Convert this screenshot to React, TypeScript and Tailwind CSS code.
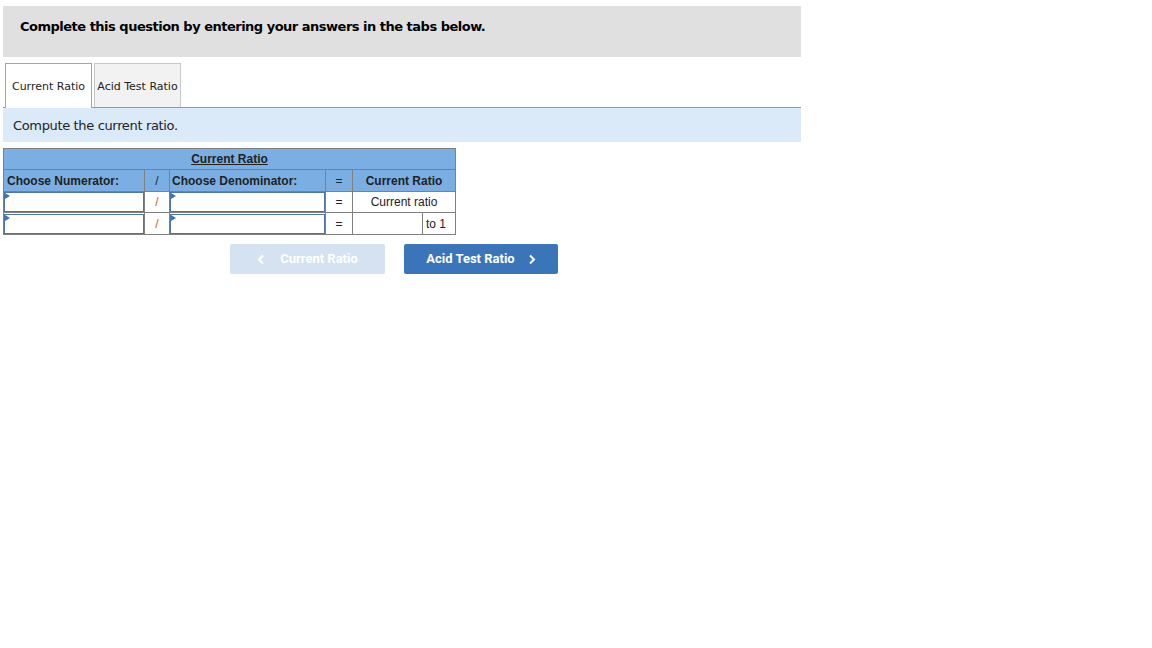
import React from "react";

const verdana = { fontFamily: '"DejaVu Sans", Verdana, sans-serif' };
const arial = { fontFamily: '"Liberation Sans", Arial, sans-serif' };
const roboto = { fontFamily: 'Roboto, "Liberation Sans", Arial, sans-serif' };

function InputCell() {
  return (
    <td className="p-0 border border-[#808080] bg-white">
      <div className="relative h-[20px] border border-[#4d75a5] bg-white">
        <div className="absolute left-0 top-0 w-0 h-0 border-t-[3px] border-b-[3px] border-l-[5px] border-t-transparent border-b-transparent border-l-[#3a73bb]" />
      </div>
    </td>
  );
}

function Chevron({ dir }: { dir: "left" | "right" }) {
  return (
    <svg width="8" height="11" viewBox="0 0 8 11" className="shrink-0">
      {dir === "right" ? (
        <polyline points="2,1.5 6,5.5 2,9.5" fill="none" stroke="currentColor" strokeWidth="2" />
      ) : (
        <polyline points="6,1.5 2,5.5 6,9.5" fill="none" stroke="currentColor" strokeWidth="2" />
      )}
    </svg>
  );
}

export default function App() {
  return (
    <div className="w-[1152px] min-h-[648px] bg-white text-[#222]">
      <div className="ml-[3px] pt-[6px] w-[798px]">
        <div
          className="h-[51px] bg-[#e0e0e0] pl-[17px] pt-[12px] text-[13px] leading-[18px] font-bold text-black tracking-[-0.5px]"
          style={verdana}
        >
          Complete this question by entering your answers in the tabs below.
        </div>

        <div className="mt-[6px] flex items-end gap-[2px] pl-[2px] border-b border-[#999999] h-[45px]" style={verdana}>
          <div className="h-[45px] w-[87px] -mb-px pt-[3px] border border-b-0 border-[#a6a6a6] bg-white flex items-center justify-center text-[11px] text-[#222]">
            Current Ratio
          </div>
          <div className="h-[44px] w-[87px] pt-[3px] border border-b-0 border-[#c8c8c8] bg-[#f2f2f2] flex items-center justify-center text-[11px] text-[#222]">
            Acid Test Ratio
          </div>
        </div>

        <div
          className="h-[34px] bg-[#dbeaf8] pl-[10px] pt-[1px] flex items-center text-[13px] text-[#222] tracking-[-0.35px]"
          style={verdana}
        >
          Compute the current ratio.
        </div>

        <table
          className="mt-[6px] table-fixed border-collapse w-[452px] text-[12px] leading-[14px] text-[#222]"
          style={arial}
        >
          <colgroup>
            <col className="w-[141px]" />
            <col className="w-[25px]" />
            <col className="w-[156px]" />
            <col className="w-[27px]" />
            <col className="w-[70px]" />
            <col className="w-[33px]" />
          </colgroup>
          <tbody>
            <tr className="h-[21px]">
              <td colSpan={6} className="border border-[#808080] bg-[#7bafe4] text-center font-bold underline p-0">
                Current Ratio
              </td>
            </tr>
            <tr className="h-[22px]">
              <td className="border border-[#808080] bg-[#7bafe4] font-bold pl-[3px] p-0">Choose Numerator:</td>
              <td className="border border-[#808080] bg-[#7bafe4] text-center p-0">/</td>
              <td className="border border-[#808080] bg-[#7bafe4] font-bold pl-[2px] p-0">Choose Denominator:</td>
              <td className="border border-[#808080] bg-[#7bafe4] text-center p-0">=</td>
              <td colSpan={2} className="border border-[#808080] bg-[#7bafe4] text-center font-bold p-0">
                Current Ratio
              </td>
            </tr>
            <tr className="h-[21px]">
              <InputCell />
              <td className="border border-[#808080] text-center text-[#c0601a] p-0">/</td>
              <InputCell />
              <td className="border border-[#808080] text-center p-0">=</td>
              <td colSpan={2} className="border border-[#808080] text-center p-0">
                Current ratio
              </td>
            </tr>
            <tr className="h-[22px]">
              <InputCell />
              <td className="border border-[#808080] text-center text-[#c0601a] p-0">/</td>
              <InputCell />
              <td className="border border-[#808080] text-center p-0">=</td>
              <td className="border border-[#808080] p-0"></td>
              <td className="border border-[#808080] pl-[3px] p-0">to 1</td>
            </tr>
          </tbody>
        </table>

        <div className="mt-[9px] pl-[227px] flex gap-[19px]" style={roboto}>
          <div className="h-[30px] w-[155px] rounded-[2px] bg-[#d5e2f1] text-white flex items-center justify-center gap-[15px] text-[13px] font-bold">
            <Chevron dir="left" />
            <span>Current Ratio</span>
          </div>
          <div className="h-[30px] w-[154px] rounded-[2px] bg-[#3a75ba] text-white flex items-center justify-center gap-[13px] text-[13px] font-bold">
            <span>Acid Test Ratio</span>
            <Chevron dir="right" />
          </div>
        </div>
      </div>
    </div>
  );
}
